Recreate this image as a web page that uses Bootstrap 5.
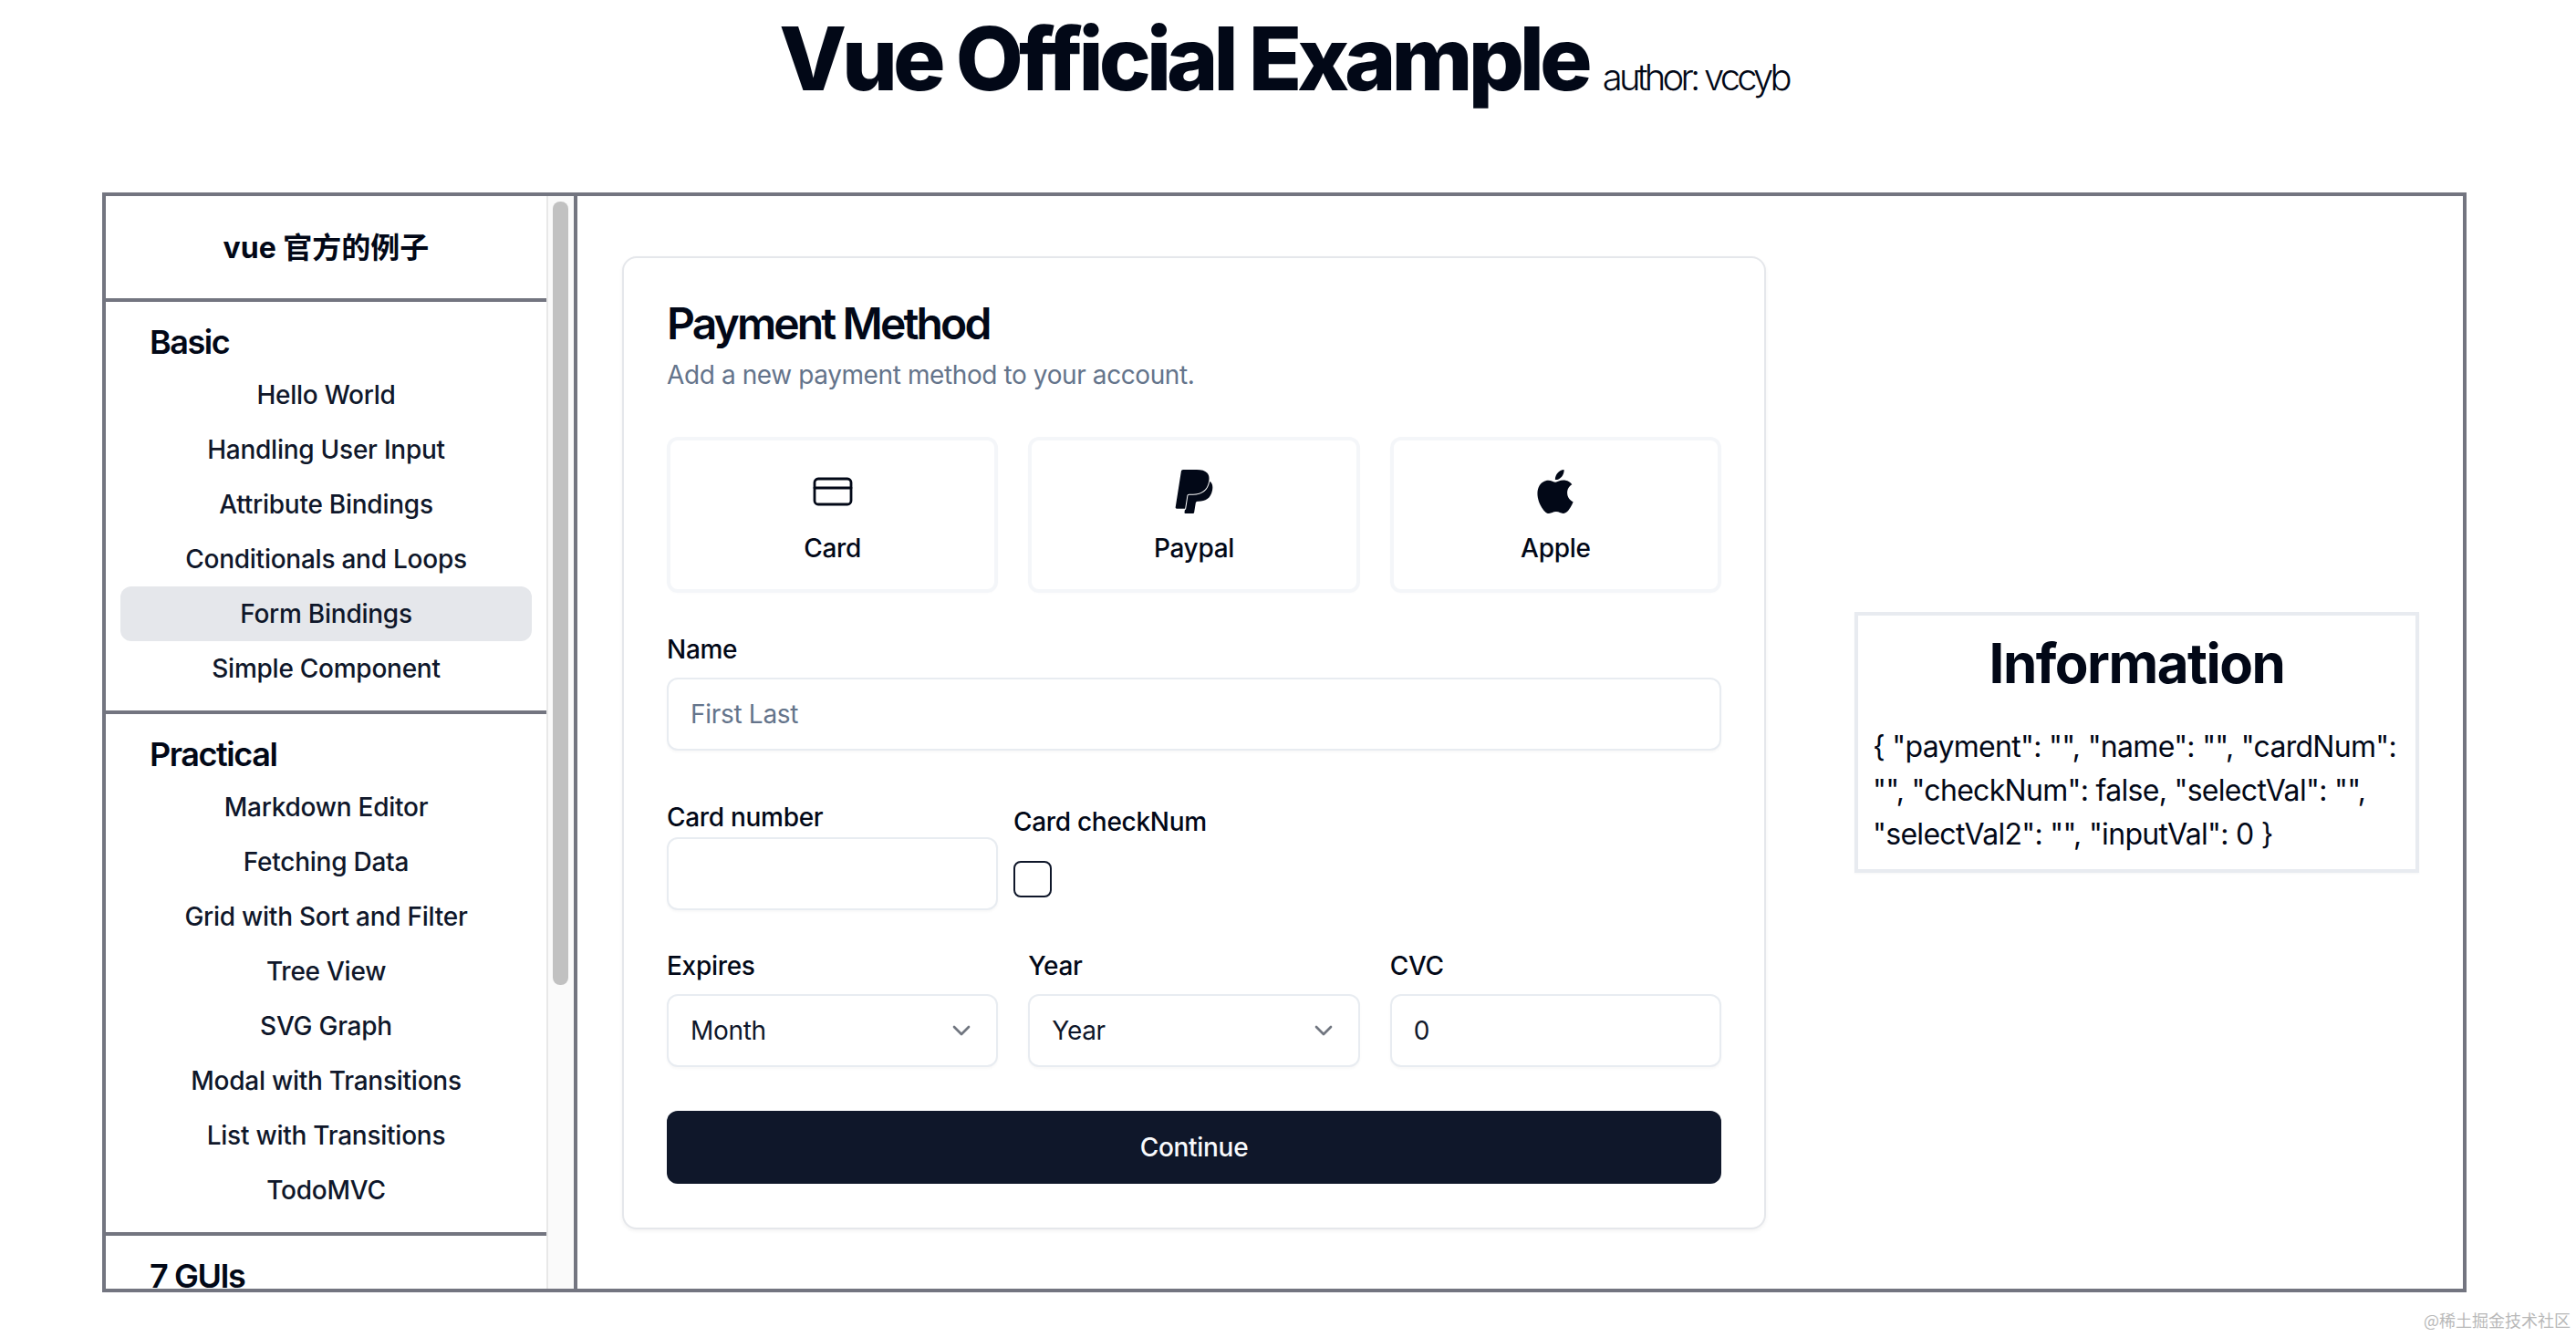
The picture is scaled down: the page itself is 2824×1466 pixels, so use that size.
<!doctype html>
<html lang="en">
<head>
<meta charset="utf-8">
<title>Vue Official Example</title>
<link href="https://cdn.jsdelivr.net/npm/bootstrap@5.3.0/dist/css/bootstrap.min.css" rel="stylesheet">
<style>
html,body{margin:0;background:#fff;overflow:hidden}
body{font-family:Inter,"Noto Sans CJK SC",sans-serif;color:#020817;width:2824px;height:1466px}
.page-head{height:211px;padding:16px 9px 0 0}
.page-title{font-size:96px;line-height:96px;font-weight:800;letter-spacing:-.052em;margin:0;color:#020817}
.page-author{font-size:40px;font-weight:300;letter-spacing:-.095em;margin-left:16px;color:#020817}
.frame{margin-left:112px;width:2592px;height:1206px;border:4px solid #737580;overflow:hidden}
.side{width:517px;border-right:4px solid #737580;flex:none;height:100%}
.side-body{width:483px;flex:none;overflow:hidden}
.side-track{width:30px;flex:none;background:#fafafa;border-left:2px solid #e8e8e8;padding:6px 6px 0 5px}
.side-thumb{height:859px;background:#c1c1c1;border-radius:8px}
.side-brand{height:116px;border-bottom:4px solid #737580;padding-top:2px;font-size:32px;font-weight:700;color:#020817}
.side-group{border-bottom:4px solid #737580;padding:24px 16px 16px}
.side-group:last-child{border-bottom:0}
.side-label{font-size:36px;line-height:40px;font-weight:600;letter-spacing:-.04em;margin:0 0 8px 32px;color:#020817}
.side-link{display:block;height:60px;line-height:60px;font-size:28px;font-weight:500;letter-spacing:-.25px;text-align:center;color:#0f172a;border-radius:12px;padding:0}
.side-link:hover{color:#0f172a}
.side-link.is-on{background:#e5e7eb}
.stage{padding-left:49px;gap:97px}
.pay-card{width:1254px;height:1067px;flex:none;border:2px solid #e5e7eb;border-radius:16px;box-shadow:0 2px 4px rgba(0,0,0,.05);padding:48px 47px;color:#020817}
.pay-title{font-size:48px;line-height:48px;font-weight:600;letter-spacing:-.06em;margin:0 0 12px}
.pay-sub{font-size:28px;line-height:40px;letter-spacing:-.4px;color:#64748b;margin:0 0 48px}
.tri{display:grid;grid-template-columns:repeat(3,1fr);gap:33px}
.opt{height:171px;border:4px solid #f4f6f9;border-radius:12px;padding-top:32px;text-align:center;font-size:28px;line-height:28px;font-weight:500;letter-spacing:-.3px;box-shadow:0 1px 2px rgba(0,0,0,.015)}
.opt svg{display:block;width:48px;height:48px;margin:0 auto 24px}
.fld-label{display:block;font-size:28px;line-height:28px;font-weight:500;letter-spacing:-.3px;margin:0 0 17px;color:#020817}
.fld-input.form-control,.fld-input.form-select{height:80px;border:2px solid #e8ecf1;border-radius:12px;font-size:28px;line-height:40px;letter-spacing:-.3px;padding:0 24px;color:#0f172a;box-shadow:0 2px 3px rgba(0,0,0,.03);font-weight:400}
.fld-input::placeholder{color:#64748b;opacity:1}
.fld-input.form-select{background-image:url("data:image/svg+xml,%3Csvg xmlns='http://www.w3.org/2000/svg' viewBox='0 0 24 24' fill='none' stroke='%23717680' stroke-width='2' stroke-linecap='round' stroke-linejoin='round'%3E%3Cpath d='m6 9 6 6 6-6'/%3E%3C/svg%3E");background-size:32px 32px;background-position:right 22px center}
.mt-name{margin-top:48px}
.mt-card{margin-top:59px}
.duo{display:flex;gap:17px}
.duo>div{width:363px;flex:none}
.chk-label{margin-top:5px;margin-bottom:29px}
.chk.form-check-input{width:42px;height:40px;margin:0;border:2px solid #0f172a;border-radius:8px;display:block;float:none}
.mt-tri{margin-top:47px}
.go.btn{height:80px;width:100%;margin-top:48px;background:#0f172a;border:0;border-radius:12px;color:#f8fafc;font-size:28px;font-weight:500;letter-spacing:-.3px}
.info{width:619px;height:286px;flex:none;border:4px solid #e8ebf0;padding:16px;box-shadow:0 1px 2px rgba(0,0,0,.04)}
.info-title{font-size:60px;line-height:60px;font-weight:700;letter-spacing:-.025em;text-align:center;margin:6px 0 38px;color:#020817}
.info-text{font-size:32px;line-height:48px;letter-spacing:-.7px;margin:0;color:#020817}
.mark-foot{font-family:"Noto Sans CJK SC",sans-serif;font-size:18px;line-height:24px;color:#b8b8b8;text-align:right;padding:18px 6px 0 0}
</style>
</head>
<body>
<header class="page-head text-center">
  <h1 class="page-title">Vue Official Example<span class="page-author">author: vccyb</span></h1>
</header>
<main class="frame d-flex">
  <aside class="side d-flex">
    <div class="side-body">
      <div class="side-brand d-flex align-items-center justify-content-center">vue 官方的例子</div>
      <section class="side-group">
        <h2 class="side-label">Basic</h2>
        <nav class="nav flex-column">
          <a class="nav-link side-link" href="#">Hello World</a>
          <a class="nav-link side-link" href="#">Handling User Input</a>
          <a class="nav-link side-link" href="#">Attribute Bindings</a>
          <a class="nav-link side-link" href="#">Conditionals and Loops</a>
          <a class="nav-link side-link is-on" href="#">Form Bindings</a>
          <a class="nav-link side-link" href="#">Simple Component</a>
        </nav>
      </section>
      <section class="side-group">
        <h2 class="side-label">Practical</h2>
        <nav class="nav flex-column">
          <a class="nav-link side-link" href="#">Markdown Editor</a>
          <a class="nav-link side-link" href="#">Fetching Data</a>
          <a class="nav-link side-link" href="#">Grid with Sort and Filter</a>
          <a class="nav-link side-link" href="#">Tree View</a>
          <a class="nav-link side-link" href="#">SVG Graph</a>
          <a class="nav-link side-link" href="#">Modal with Transitions</a>
          <a class="nav-link side-link" href="#">List with Transitions</a>
          <a class="nav-link side-link" href="#">TodoMVC</a>
        </nav>
      </section>
      <section class="side-group">
        <h2 class="side-label">7 GUIs</h2>
      </section>
    </div>
    <div class="side-track"><div class="side-thumb"></div></div>
  </aside>
  <div class="stage d-flex align-items-center flex-grow-1">
    <form class="card pay-card">
      <h3 class="pay-title">Payment Method</h3>
      <p class="pay-sub">Add a new payment method to your account.</p>
      <div class="tri">
        <div class="opt">
          <svg viewBox="0 0 24 24" fill="none" stroke="#020817" stroke-width="1.4" stroke-linecap="round" stroke-linejoin="round"><rect x="2" y="5" width="20" height="14" rx="2"/><path d="M2 10h20"/></svg>
          Card
        </div>
        <div class="opt">
          <svg viewBox="0 0 24 24" fill="#020817"><path d="M7.076 21.337H2.47a.641.641 0 0 1-.633-.74L4.944.901C5.026.382 5.474 0 5.998 0h7.46c2.57 0 4.578.543 5.69 1.81 1.01 1.15 1.304 2.42 1.012 4.287-.023.143-.047.288-.077.437-.983 5.05-4.349 6.797-8.647 6.797h-2.19c-.524 0-.968.382-1.05.9l-1.12 7.106zm14.146-14.42a3.35 3.35 0 0 0-.607-.541c-.013.076-.026.175-.041.254-.93 4.778-4.005 7.201-9.138 7.201h-2.19a.563.563 0 0 0-.556.479l-1.187 7.527h-.506l-.24 1.516a.56.56 0 0 0 .554.647h3.882c.46 0 .85-.334.922-.788.06-.26.76-4.852.816-5.09a.932.932 0 0 1 .923-.788h.58c3.76 0 6.705-1.528 7.565-5.946.36-1.847.174-3.388-.777-4.471z"/></svg>
          Paypal
        </div>
        <div class="opt">
          <svg viewBox="0 0 24 24" fill="#020817"><path d="M12.152 6.896c-.948 0-2.415-1.078-3.96-1.04-2.04.027-3.91 1.183-4.961 3.014-2.117 3.675-.546 9.103 1.519 12.09 1.013 1.454 2.208 3.09 3.792 3.039 1.52-.065 2.09-.987 3.935-.987 1.831 0 2.35.987 3.96.948 1.637-.026 2.676-1.48 3.676-2.948 1.156-1.688 1.636-3.325 1.662-3.415-.039-.013-3.182-1.221-3.22-4.857-.026-3.04 2.48-4.494 2.597-4.559-1.429-2.09-3.623-2.324-4.39-2.376-2-.156-3.675 1.09-4.61 1.09zM15.53 3.83c.843-1.012 1.4-2.427 1.245-3.83-1.207.052-2.662.805-3.532 1.818-.78.896-1.454 2.338-1.273 3.714 1.338.104 2.715-.688 3.559-1.701"/></svg>
          Apple
        </div>
      </div>
      <div class="mt-name">
        <label class="fld-label" for="f-name">Name</label>
        <input id="f-name" class="form-control fld-input" placeholder="First Last">
      </div>
      <div class="duo mt-card">
        <div>
          <label class="fld-label mb-2" for="f-num">Card number</label>
          <input id="f-num" class="form-control fld-input">
        </div>
        <div>
          <label class="fld-label chk-label" for="f-chk">Card checkNum</label>
          <input id="f-chk" class="form-check-input chk" type="checkbox">
        </div>
      </div>
      <div class="tri mt-tri">
        <div>
          <label class="fld-label" for="f-m">Expires</label>
          <select id="f-m" class="form-select fld-input"><option>Month</option></select>
        </div>
        <div>
          <label class="fld-label" for="f-y">Year</label>
          <select id="f-y" class="form-select fld-input"><option>Year</option></select>
        </div>
        <div>
          <label class="fld-label" for="f-c">CVC</label>
          <input id="f-c" class="form-control fld-input" value="0">
        </div>
      </div>
      <button type="button" class="btn go">Continue</button>
    </form>
    <section class="info">
      <h2 class="info-title">Information</h2>
      <p class="info-text">{ "payment": "", "name": "", "cardNum": "", "checkNum": false, "selectVal": "", "selectVal2": "", "inputVal": 0 }</p>
    </section>
  </div>
</main>
<footer class="mark-foot">@稀土掘金技术社区</footer>
<script src="https://cdn.jsdelivr.net/npm/bootstrap@5.3.0/dist/js/bootstrap.bundle.min.js"></script>
</body>
</html>
